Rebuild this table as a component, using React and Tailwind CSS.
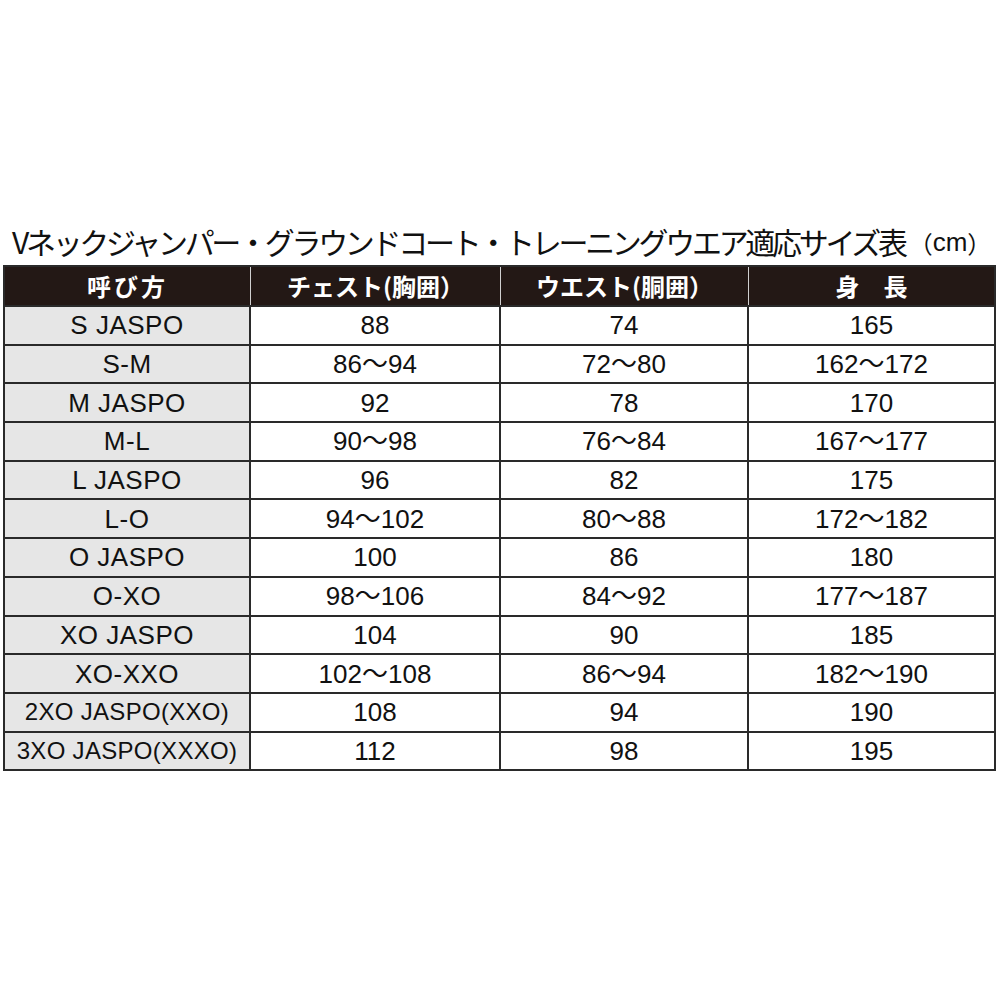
import React from "react";

const rows = [
  ["S JASPO", "88", "74", "165"],
  ["S-M", "86～94", "72～80", "162～172"],
  ["M JASPO", "92", "78", "170"],
  ["M-L", "90～98", "76～84", "167～177"],
  ["L JASPO", "96", "82", "175"],
  ["L-O", "94～102", "80～88", "172～182"],
  ["O JASPO", "100", "86", "180"],
  ["O-XO", "98～106", "84～92", "177～187"],
  ["XO JASPO", "104", "90", "185"],
  ["XO-XXO", "102～108", "86～94", "182～190"],
  ["2XO JASPO(XXO)", "108", "94", "190"],
  ["3XO JASPO(XXXO)", "112", "98", "195"],
];

const font = { fontFamily: '"Liberation Sans", "Noto Sans CJK JP", sans-serif' };
const jp = { fontFamily: '"Noto Sans CJK JP", sans-serif' };

export default function App() {
  return (
    <div className="w-[1000px] h-[1000px] bg-white relative" style={font}>
      <div className="pt-[223px] pl-[12px] flex items-end text-[#111]">
        <span className="text-[30px] leading-[37px] tracking-[-3.3px]" style={jp}>
          Vネックジャンパー・グラウンドコート・トレーニングウエア適応サイズ表
        </span>
        <span className="text-[24px] leading-[35px] ml-[4px]" style={jp}>（</span>
        <span className="text-[26px] leading-[35px]">cm</span>
        <span className="text-[24px] leading-[35px]" style={jp}>）</span>
      </div>
      <div className="ml-[3px] mt-[5px] w-[993px] border-2 border-[#2a2a2a]">
        <div className="grid grid-cols-[246px_250px_248px_245px] grid-rows-[38px] h-[38px] bg-[#231815] text-white font-bold text-[24px] leading-[30px]" style={jp}>
          <div className="flex items-center justify-center border-r border-[#d0d0d0] tracking-[3px]">呼び方</div>
          <div className="flex items-center justify-center border-r border-[#d0d0d0]">チェスト(胸囲）</div>
          <div className="flex items-center justify-center border-r border-[#d0d0d0]">ウエスト(胴囲）</div>
          <div className="flex items-center justify-center">身　長</div>
        </div>
        {rows.map((r, i) => (
          <div key={i} className="grid grid-cols-[246px_250px_248px_245px] grid-rows-[36.7px] h-[38.7px] border-t-2 border-[#2a2a2a] text-[26px] leading-[30px] text-[#111]">
            <div className={"flex items-center justify-center bg-[#e6e6e6] border-r-2 border-[#2a2a2a] whitespace-nowrap " + (i >= 10 ? "text-[24px] tracking-[0.3px]" : "tracking-[0.5px]")}>{r[0]}</div>
            <div className="flex items-center justify-center border-r-2 border-[#2a2a2a]">{r[1]}</div>
            <div className="flex items-center justify-center border-r-2 border-[#2a2a2a]">{r[2]}</div>
            <div className="flex items-center justify-center">{r[3]}</div>
          </div>
        ))}
      </div>
    </div>
  );
}
